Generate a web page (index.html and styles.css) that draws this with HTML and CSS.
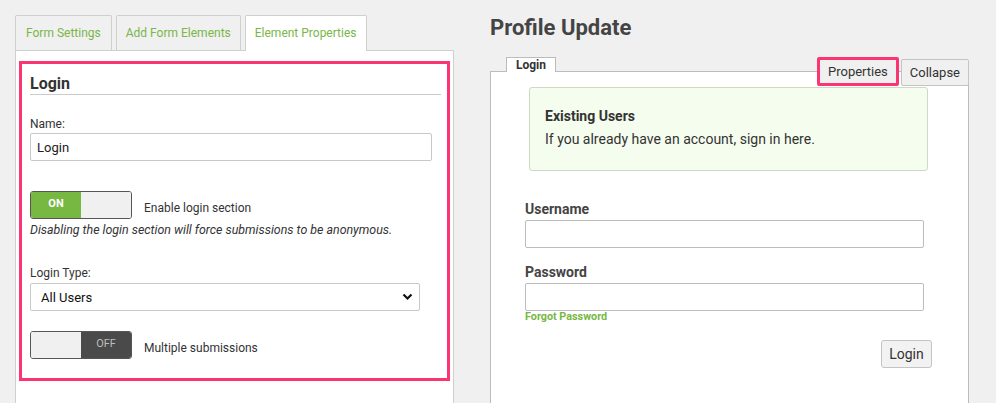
FILE: index.html
```html
<!DOCTYPE html>
<html lang="en">
<head>
  <meta charset="UTF-8">
  <title>Profile Update - Form Builder</title>
  <link rel="stylesheet" href="styles.css">
</head>
<body>
  <div class="page">
    <div class="sidebar">
      <div class="tabs">
        <div class="tab">Form Settings</div>
        <div class="tab">Add Form Elements</div>
        <div class="tab active">Element Properties</div>
      </div>
      <div class="panel">
        <div class="props">
          <h2 class="props-title">Login</h2>

          <label class="lbl" for="elName">Name:</label>
          <input class="txt" id="elName" type="text" value="Login">

          <div class="switch-row">
            <div class="switch on"><span class="knob-on">ON</span><span class="knob-blank"></span></div>
            <span class="switch-label">Enable login section</span>
          </div>
          <p class="hint">Disabling the login section will force submissions to be anonymous.</p>

          <label class="lbl lbl-type" for="loginType">Login Type:</label>
          <div class="select">
            <span>All Users</span>
            <svg width="11" height="8" viewBox="0 0 11 8"><path d="M1.5 1.5 L5.5 5.5 L9.5 1.5" fill="none" stroke="#111" stroke-width="2.2"/></svg>
          </div>

          <div class="switch-row last">
            <div class="switch off"><span class="knob-blank"></span><span class="knob-off">OFF</span></div>
            <span class="switch-label">Multiple submissions</span>
          </div>
        </div>
      </div>
    </div>

    <div class="preview">
      <h1 class="title">Profile Update</h1>
      <div class="section">
        <div class="section-tab">Login</div>
        <div class="section-body">
          <div class="tools">
            <button class="tool tool-hl">Properties</button>
            <button class="tool">Collapse</button>
          </div>

          <div class="notice">
            <div class="notice-title">Existing Users</div>
            <div class="notice-text">If you already have an account, sign in here.</div>
          </div>

          <div class="field">
            <label class="field-lbl">Username</label>
            <input class="field-input" type="text">
          </div>
          <div class="field">
            <label class="field-lbl">Password</label>
            <input class="field-input" type="password">
            <a class="forgot" href="#">Forgot Password</a>
          </div>

          <div class="actions">
            <button class="login-btn">Login</button>
          </div>
        </div>
      </div>
    </div>
  </div>
</body>
</html>
```

FILE: styles.css
```css
body {
  margin: 0;
  background: #f0f0f0;
  font-family: Roboto, "Liberation Sans", Arial, sans-serif;
  color: #333;
  overflow: hidden;
}
.page {
  display: flex;
  align-items: flex-start;
  padding: 15px 0 0 15px;
  height: 388px;
}

/* left side: builder */
.sidebar {
  width: 439px;
  display: flex;
  flex-direction: column;
  height: 100%;
}
.tabs {
  display: flex;
  gap: 4px;
  height: 35px;
}
.tab {
  box-sizing: border-box;
  height: 35px;
  padding: 0 10px;
  border: 1px solid #cfcfcf;
  border-bottom: none;
  border-radius: 2px 2px 0 0;
  font-size: 12px;
  line-height: 34px;
  color: #7ab648;
  background: #f0f0f0;
}
.tab:nth-child(2) {
  padding: 0 9px;
}
.tab.active {
  background: #fff;
  height: 36px;
  position: relative;
  z-index: 1;
  padding: 0 9px;
}
.panel {
  flex: 1;
  background: #fff;
  border: 1px solid #cfcfcf;
  border-bottom: none;
  padding: 10px 3px 0 3px;
}
.props {
  border: 3px solid #fb3571;
  padding: 11px 6px 19px 8px;
}
.props-title {
  margin: 0 0 22px;
  font-size: 16px;
  line-height: 18px;
  font-weight: bold;
  color: #333;
  padding-bottom: 1px;
  border-bottom: 1px solid #ccc;
}
.lbl {
  display: block;
  font-size: 12px;
  line-height: 14px;
  margin-bottom: 2px;
}
.txt {
  display: block;
  box-sizing: border-box;
  width: 402px;
  height: 28px;
  margin: 0;
  padding: 0 6px;
  border: 1px solid #c8c8c8;
  border-radius: 2px;
  font-family: inherit;
  font-size: 13px;
  color: #222;
}
.switch-row {
  display: flex;
  align-items: center;
  margin-top: 30px;
}
.switch-row.last {
  margin-top: 20px;
}
.switch {
  box-sizing: border-box;
  display: flex;
  width: 102px;
  height: 28px;
  border: 1px solid #555;
  border-radius: 3px;
  overflow: hidden;
}
.switch span {
  flex: 1;
  display: flex;
  align-items: center;
  justify-content: center;
  font-size: 11px;
  font-weight: bold;
  padding-bottom: 4px;
}
.knob-on {
  background: #77b843;
  color: #fff;
}
.knob-blank {
  background: #f0f0f0;
}
.knob-off {
  background: #4a4a4a;
  color: #bdbdbd;
  font-weight: normal !important;
}
.switch-label {
  font-size: 12px;
  margin-left: 12px;
  padding-top: 6px;
}
.hint {
  margin: 4px 0 0;
  font-size: 12.4px;
  line-height: 14px;
  font-style: italic;
}
.lbl-type {
  margin-top: 29px;
  margin-bottom: 3px;
}
.select {
  box-sizing: border-box;
  width: 390px;
  height: 28px;
  display: flex;
  align-items: center;
  justify-content: space-between;
  padding: 0 6px 0 10px;
  border: 1px solid #c8c8c8;
  border-radius: 2px;
  background: #fff;
  font-size: 13px;
  color: #111;
}

/* right side: preview */
.preview {
  margin-left: 36px;
  width: 479px;
  height: 100%;
  display: flex;
  flex-direction: column;
}
.title {
  margin: 0;
  font-size: 22px;
  font-weight: bold;
  color: #444;
  line-height: 26px;
  height: 42px;
}
.section {
  flex: 1;
  display: flex;
  flex-direction: column;
}
.section-tab {
  align-self: flex-start;
  margin-left: 16px;
  margin-bottom: -1px;
  padding: 1px 9px 0;
  height: 13px;
  border: 1px solid #bbb;
  border-bottom: none;
  background: #fff;
  font-size: 12px;
  font-weight: bold;
  line-height: 13px;
  position: relative;
  z-index: 1;
}
.section-body {
  flex: 1;
  position: relative;
  background: #fff;
  border: 1px solid #bbb;
  border-bottom: none;
  padding: 15px 36px 0 34px;
}
.tools {
  position: absolute;
  top: -15px;
  right: -1px;
  display: flex;
  align-items: flex-end;
  gap: 2px;
}
.tool {
  box-sizing: border-box;
  height: 27px;
  margin: 0;
  padding: 0 8px;
  border: 1px solid #c4c4c4;
  border-radius: 2px;
  background: #f0f0f0;
  font-family: inherit;
  font-size: 13px;
  color: #333;
}
.tool-hl {
  height: 29px;
  padding: 0 8px;
  border: 3px solid #fb3571;
  margin-bottom: 0;
}
.notice {
  box-sizing: border-box;
  width: 399px;
  margin-left: 4px;
  height: 84px;
  padding: 20px 15px 0;
  border: 1px solid #cfd8c6;
  border-radius: 3px;
  background: #f5fdee;
}
.notice-title {
  font-size: 14px;
  line-height: 17px;
  font-weight: bold;
  margin-bottom: 6px;
}
.notice-text {
  font-size: 14px;
  line-height: 17px;
}
.field {
  margin-top: 30px;
  display: flex;
  flex-direction: column;
  align-items: flex-start;
}
.field + .field {
  margin-top: 16px;
}
.field-lbl {
  font-size: 14px;
  line-height: 16px;
  font-weight: bold;
  color: #444;
  margin-bottom: 3px;
}
.field-input {
  box-sizing: border-box;
  width: 399px;
  height: 28px;
  margin: 0;
  border: 1px solid #bdbdbd;
  border-radius: 2px;
}
.forgot {
  font-size: 10.8px;
  line-height: 12px;
  font-weight: bold;
  color: #77b843;
  text-decoration: none;
}
.actions {
  display: flex;
  justify-content: flex-end;
  margin-top: 17px;
}
.login-btn {
  box-sizing: border-box;
  height: 28px;
  width: 51px;
  margin: 0;
  padding: 0;
  border: 1px solid #c4c4c4;
  border-radius: 3px;
  background: #f2f2f2;
  font-family: inherit;
  font-size: 14px;
  color: #333;
}
```
